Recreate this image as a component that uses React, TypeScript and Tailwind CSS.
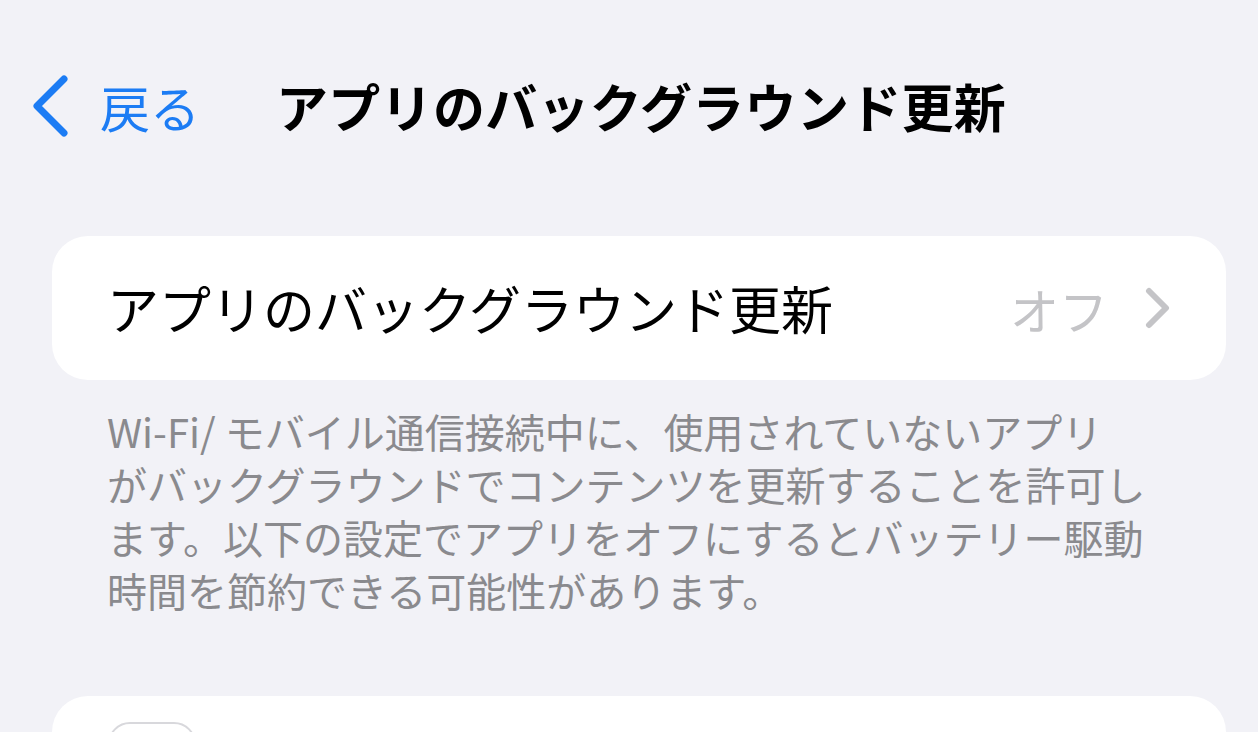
import React from 'react'

const font = { fontFamily: '"Noto Sans CJK JP", "Noto Sans", sans-serif' }

const BackChevron = () => (
  <svg width="40" height="62" viewBox="0 0 40 62" fill="none">
    <path d="M34 4 L7 31 L34 58" stroke="#1c7cf4" strokeWidth="7" strokeLinecap="round" strokeLinejoin="round" />
  </svg>
)

const RowChevron = () => (
  <svg width="28" height="42" viewBox="0 0 28 42" fill="none">
    <path d="M5 4 L22 21 L5 38" stroke="#c4c4c7" strokeWidth="6" strokeLinecap="round" strokeLinejoin="round" />
  </svg>
)

const footerLines = [
  'Wi-Fi/ モバイル通信接続中に、使用されていないアプリ',
  'がバックグラウンドでコンテンツを更新することを許可し',
  'ます。以下の設定でアプリをオフにするとバッテリー駆動',
  '時間を節約できる可能性があります。',
]

export default function App() {
  return (
    <div className="w-[1258px] h-[732px] overflow-hidden bg-[#f2f2f7] flex flex-col" style={font}>
      {/* nav bar */}
      <div className="shrink-0 h-[214px] flex items-center pl-[30px] pb-[2px]">
        <BackChevron />
        <span className="ml-[30px] text-[50px] text-[#1c7cf4] leading-none">戻る</span>
        <span className="ml-[76px] text-[52px] font-bold text-black leading-none tracking-[0.3px]">
          アプリのバックグラウンド更新
        </span>
      </div>

      {/* main toggle row */}
      <div className="shrink-0 ml-[52px] mr-[32px] mt-[22px] h-[144px] rounded-[36px] bg-white flex items-center pl-[55px] pr-[54px]">
        <span className="flex-1 text-[52px] text-black leading-none">アプリのバックグラウンド更新</span>
        <span className="text-[49px] text-[#c4c4c7] leading-none">オフ</span>
        <span className="ml-[36px] flex items-center">
          <RowChevron />
        </span>
      </div>

      {/* footer note */}
      <div className="shrink-0 pl-[107px] mt-[25px] text-[40px] leading-[53px] text-[#8a8a8e]">
        {footerLines.map((line) => (
          <div key={line} className="whitespace-nowrap">
            {line}
          </div>
        ))}
      </div>

      {/* app list */}
      <div className="shrink-0 ml-[52px] mr-[32px] mt-[79px] h-[200px] rounded-t-[36px] bg-white pl-[56px] pt-[26px]">
        <div className="w-[88px] h-[88px] rounded-[22px] border-2 border-[#d8d8dc] bg-white" />
      </div>
    </div>
  )
}
